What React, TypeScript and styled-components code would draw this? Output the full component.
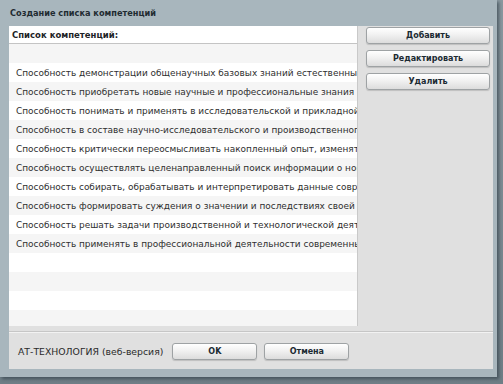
import React from 'react'
import styled, { createGlobalStyle } from 'styled-components'

const GlobalStyle = createGlobalStyle`
  html, body {
    margin: 0;
    padding: 0;
    background: #7c8b93;
    font-family: 'DejaVu Sans', Verdana, sans-serif;
  }
`

const Page = styled.div`
  width: 503px;
  height: 384px;
  background: linear-gradient(#8a989f, #6f7e86);
  overflow: hidden;
`

const Window = styled.div`
  width: 497px;
  height: 377px;
  background: #a8b6bd;
  display: flex;
  flex-direction: column;
  box-shadow: 2px 2px 3px rgba(40, 55, 65, 0.6);
`

const TitleBar = styled.div`
  height: 26px;
  padding-left: 10px;
  display: flex;
  align-items: center;
  font-size: 8.2px;
  font-weight: bold;
  color: #1f2b31;
`

const Panel = styled.div`
  margin: 0 4px 0 9px;
  height: 343px;
  background: #e0e0e0;
  display: flex;
  flex-direction: column;
`

const Main = styled.div`
  height: 300px;
  display: flex;
`

const ListBox = styled.div`
  width: 348px;
  background: #fff;
  border-right: 1px solid #c9c9c9;
  display: flex;
  flex-direction: column;
  overflow: hidden;
`

const ListHeader = styled.div`
  height: 17px;
  flex: none;
  padding-left: 3px;
  display: flex;
  align-items: center;
  font-size: 8.5px;
  font-weight: bold;
  color: #1c2226;
  border-bottom: 1px solid #c4c4c4;
  box-shadow: 0 1px 2px rgba(0, 0, 0, 0.08);
`

const Row = styled.div<{ $odd: boolean }>`
  height: 19px;
  flex: none;
  padding-left: 7px;
  display: flex;
  align-items: center;
  white-space: nowrap;
  font-size: 8.95px;
  color: #2e2e2e;
  background: ${p => (p.$odd ? '#fff' : '#f5f5f5')};
`

const Side = styled.div`
  flex: 1;
  padding: 1px 3px 0 8px;
  display: flex;
  flex-direction: column;
  gap: 6px;
`

const Button = styled.button<{ $width?: number }>`
  height: 17px;
  width: ${p => (p.$width ? `${p.$width}px` : '100%')};
  padding: 0;
  border: 1px solid #9ea2a4;
  border-radius: 3px;
  background: linear-gradient(#ffffff, #f1f1f1 45%, #dcdcdc);
  box-shadow: 0 1px 1px rgba(0, 0, 0, 0.15);
  font-family: 'DejaVu Sans', Verdana, sans-serif;
  font-size: 8px;
  font-weight: bold;
  color: #1b2a32;
  cursor: pointer;
`

const Footer = styled.div`
  margin-top: 5px;
  flex: 1;
  border-top: 1px solid #c6c6c6;
  box-shadow: inset 0 1px 0 #f2f2f2;
  display: flex;
  align-items: center;
  padding: 1px 0 0 9px;
  gap: 7px;
`

const Product = styled.span`
  font-size: 9.3px;
  color: #2a2a2a;
  margin-right: 2px;
`

const items = [
  'Способность демонстрации общенаучных базовых знаний естественных наук',
  'Способность приобретать новые научные и профессиональные знания',
  'Способность понимать и применять в исследовательской и прикладной деятельности',
  'Способность в составе научно-исследовательского и производственного коллектива',
  'Способность критически переосмысливать накопленный опыт, изменять',
  'Способность осуществлять целенаправленный поиск информации о новейших',
  'Способность собирать, обрабатывать и интерпретировать данные современных',
  'Способность формировать суждения о значении и последствиях своей профессиональной',
  'Способность решать задачи производственной и технологической деятельности',
  'Способность применять в профессиональной деятельности современные',
]

const rows = ['', ...items, '', '', '', '', '']

export default function App() {
  return (
    <Page>
      <GlobalStyle />
      <Window>
        <TitleBar>Создание списка компетенций</TitleBar>
        <Panel>
          <Main>
            <ListBox>
              <ListHeader>Список компетенций:</ListHeader>
              {rows.map((text, i) => (
                <Row key={i} $odd={i % 2 === 1}>
                  {text}
                </Row>
              ))}
            </ListBox>
            <Side>
              <Button>Добавить</Button>
              <Button>Редактировать</Button>
              <Button>Удалить</Button>
            </Side>
          </Main>
          <Footer>
            <Product>АТ-ТЕХНОЛОГИЯ (веб-версия)</Product>
            <Button $width={85}>OK</Button>
            <Button $width={85}>Отмена</Button>
          </Footer>
        </Panel>
      </Window>
    </Page>
  )
}
